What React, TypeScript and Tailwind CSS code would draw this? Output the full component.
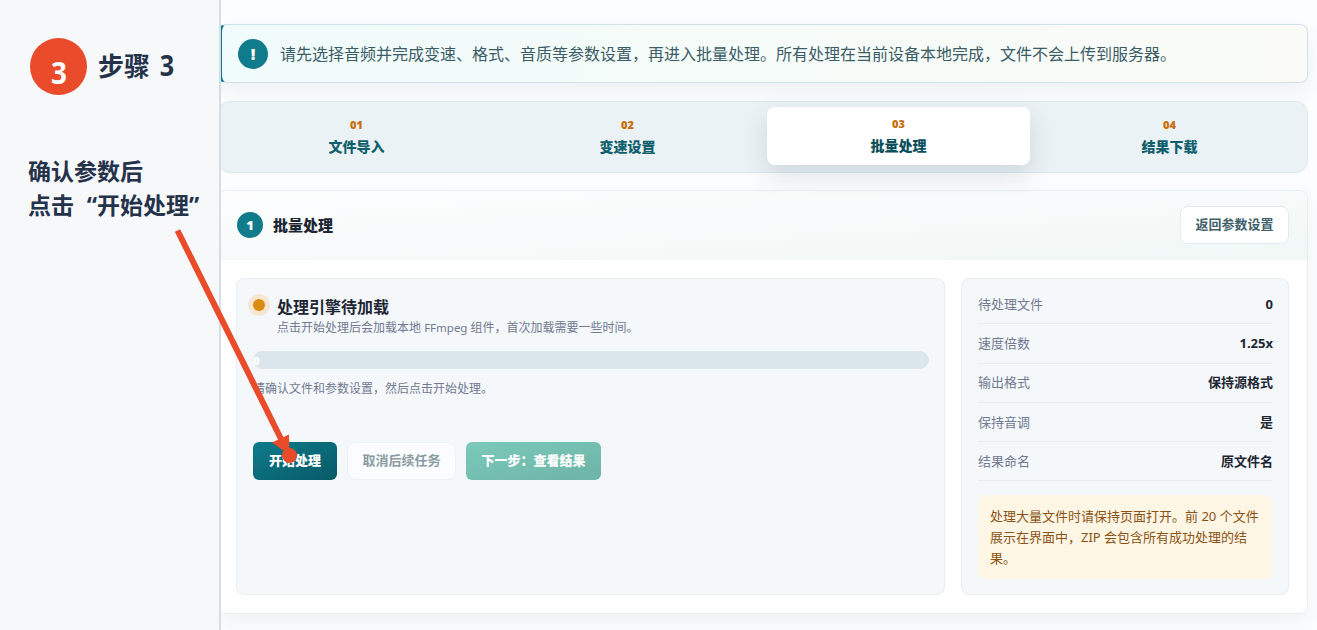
import React from "react";

const steps = [
  { no: "01", label: "文件导入" },
  { no: "02", label: "变速设置" },
  { no: "03", label: "批量处理", active: true },
  { no: "04", label: "结果下载" },
];

const summary = [
  { label: "待处理文件", value: "0" },
  { label: "速度倍数", value: "1.25x" },
  { label: "输出格式", value: "保持源格式" },
  { label: "保持音调", value: "是" },
  { label: "结果命名", value: "原文件名" },
];

function Guide() {
  return (
    <aside className="relative z-10 h-full w-[221px] shrink-0 border-r-2 border-[#d5dde9] bg-[#f7f8fa] pl-7 pt-[38px] text-[#24324a]">
      <div className="ml-[2px] flex items-center gap-[11px]">
        <span className="flex size-[57px] items-center justify-center rounded-full bg-[#ea4b2a] pt-[11px] pl-px font-['Open_Sans',sans-serif] text-[31px] leading-none font-bold text-white">
          <span className="inline-block scale-x-90">3</span>
        </span>
        <h2 className="-mt-[3px] font-['Open_Sans','Noto_Sans_CJK_SC',sans-serif] text-[26px] leading-[54px] font-bold">
          步骤 <span className="ml-[2px] inline-block scale-x-90 text-[28px]">3</span>
        </h2>
      </div>
      <p className="mt-[59px] font-['Noto_Sans','Noto_Sans_CJK_SC',sans-serif] text-[23px] leading-[34px] font-bold whitespace-nowrap">
        确认参数后
        <br />
        点击<span className="inline-block w-[23px] text-right">“</span>开始处理”
      </p>
    </aside>
  );
}

function Notice() {
  return (
    <div className="flex h-[59px] items-center gap-3 rounded-lg border border-l-4 border-[#d0e2e7] border-l-[#0f7b8b] bg-linear-to-r from-[#f0fbfb] to-[#fafbf6] pl-4 shadow-[0_8px_22px_rgba(20,70,90,0.07)]">
      <span className="flex size-[30px] items-center justify-center rounded-full bg-[#0f7b8b] text-base leading-none font-black text-white">
        !
      </span>
      <p className="text-base text-[#3b5b66]">
        请先选择音频并完成变速、格式、音质等参数设置，再进入批量处理。所有处理在当前设备本地完成，文件不会上传到服务器。
      </p>
    </div>
  );
}

function Steps() {
  return (
    <nav className="mt-[18px] grid h-[72px] grid-cols-4 gap-2 rounded-xl border border-[#dce8ee] bg-[#ebf2f5] p-1.5">
      {steps.map((s) => (
        <div
          key={s.no}
          className={
            s.active
              ? "-mt-px mb-px flex flex-col items-center rounded-lg bg-white pt-[8px] text-[#0b4f5c] shadow-[0_10px_26px_rgba(20,60,80,0.14)]"
              : "flex flex-col items-center pt-[8px] text-[#0f5f6d]"
          }
        >
          <span className="text-[11px] leading-[17px] font-black text-[#c96f0a]">{s.no}</span>
          <span className="mt-[3px] text-sm leading-[22px] font-black">{s.label}</span>
        </div>
      ))}
    </nav>
  );
}

function TaskCard() {
  return (
    <div className="-ml-px h-[317px] rounded-lg border border-[#e7edf1] bg-[#f4f8fb] p-4">
      <div className="flex gap-3">
        <span className="mt-1 size-3 shrink-0 rounded-full bg-[#d98b12] shadow-[0_0_0_5px_#f8e6d3]" />
        <div className="pt-px">
          <h3 className="text-base leading-[22px] font-bold text-[#1d2632]">处理引擎待加载</h3>
          <p className="pt-px text-xs leading-[18px] text-[#727990]">
            点击开始处理后会加载本地 <span className="text-[11.5px]">FFmpeg</span> 组件，首次加载需要一些时间。
          </p>
        </div>
      </div>
      <div className="mt-[14px] -mr-px flex h-[18px] items-center overflow-hidden rounded-full bg-[#dbe6ec]">
        <span className="text-[11px] leading-none font-black text-white">0</span>
      </div>
      <p className="mt-[11px] text-xs leading-[18px] text-[#727990]">请确认文件和参数设置，然后点击开始处理。</p>
      <div className="mt-[44px] flex gap-2.5 text-[13px] font-black">
        <button className="h-[38px] w-[84px] rounded-md bg-linear-to-br from-[#0f7b8b] to-[#075a67] text-white">开始处理</button>
        <button className="h-[38px] w-[109px] rounded-lg border border-[#edf2f5] bg-[#fafcfd] font-semibold text-[#8b9ba2]">
          取消后续任务
        </button>
        <button className="h-[38px] w-[135px] rounded-md bg-linear-to-br from-[#7bcaba] to-[#6eb3a8] text-white">
          下一步：查看结果
        </button>
      </div>
    </div>
  );
}

function SummaryCard() {
  return (
    <div className="h-[317px] rounded-lg border border-[#e7edf1] bg-[#f4f8fb] pr-[15px] pl-4 pt-[6px]">
      {summary.map((r) => (
        <div key={r.label} className="flex h-[39.25px] items-center justify-between border-b border-[#e8eef2] pt-px text-[13px]">
          <span className="text-[#727990]">{r.label}</span>
          <strong className="font-bold text-[#1d2632]">{r.value}</strong>
        </div>
      ))}
      <p className="mt-[14px] h-[84px] rounded-lg bg-[#fef6e4] px-3 pt-[11px] text-[13px] leading-[20.8px] text-[#8a5214]">
        处理大量文件时请保持页面打开。前 20 个文件展示在界面中，ZIP 会包含所有成功处理的结果。
      </p>
    </div>
  );
}

function BatchPanel() {
  return (
    <section className="mt-[17px] h-[424px] overflow-hidden rounded-lg border border-[#e8eef1] bg-white">
      <header className="flex h-[69px] items-center justify-between bg-linear-to-br from-[#fdfdfe] to-[#f0f7f5] px-[18px] pb-px">
        <div className="flex items-center gap-2.5">
          <span className="flex size-[26px] items-center justify-center rounded-full bg-[#0f7b8b] text-[13px] leading-none font-black text-white">
            1
          </span>
          <h2 className="text-[15px] font-black text-[#1d2632]">批量处理</h2>
        </div>
        <button className="h-[38px] w-[109px] rounded-lg border border-[#e3ebee] bg-white text-[13px] font-semibold text-[#405f69]">
          返回参数设置
        </button>
      </header>
      <div className="grid grid-cols-[minmax(0,1fr)_328px] gap-4 p-[18px]">
        <TaskCard />
        <SummaryCard />
      </div>
    </section>
  );
}

export default function App() {
  return (
    <div className="relative flex h-[630px] w-[1317px] overflow-hidden bg-[#fcfdfe] font-['Noto_Sans','Noto_Sans_CJK_SC',sans-serif]">
      <Guide />
      <main className="-ml-[3px] w-[1090px] shrink-0 pt-6">
        <Notice />
        <Steps />
        <div className="rounded-lg shadow-[0_8px_24px_rgba(20,50,70,0.06)]">
          <BatchPanel />
        </div>
      </main>
      <svg className="pointer-events-none absolute top-0 left-0 z-20" width="1317" height="630" fill="#ea4b2a">
        <line x1="177.500" y1="230.500" x2="285" y2="447" stroke="#ea4b2a" strokeWidth="6" />
        <path d="M272 442.500 L289 434.500 L289.500 455 Z" />
        <circle cx="289.500" cy="455.500" r="7.500" />
      </svg>
    </div>
  );
}
